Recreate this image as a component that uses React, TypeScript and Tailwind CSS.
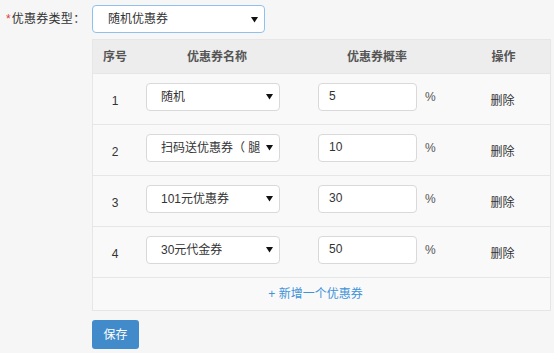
import React from "react";

const rows = [
  { n: "1", name: "随机", p: "5" },
  { n: "2", name: "扫码送优惠券（ 腿", p: "10" },
  { n: "3", name: "101元优惠券", p: "30" },
  { n: "4", name: "30元代金券", p: "50" },
];

function Arrow() {
  return (
    <svg width="7" height="7" viewBox="0 0 7 7" className="shrink-0">
      <polygon points="0,1 7,1 3.5,6.5" fill="#111" />
    </svg>
  );
}

export default function App() {
  return (
    <div
      className="w-[554px] h-[353px] bg-[#f6f6f6] text-[12px] text-[#333] overflow-hidden"
      style={{ fontFamily: '"Liberation Sans", "Noto Sans CJK SC", sans-serif' }}
    >
      <div className="flex items-center pt-[5px]">
        <div className="w-[92px] pl-[6px] flex items-center">
          <span className="text-[#e4393c] mr-[1px]">*</span>
          <span className="text-[12px] text-[#333] tracking-[0.3px]">优惠券类型：</span>
        </div>
        <div className="w-[173px] h-[28px] bg-white border border-[#8fc1ee] rounded-[4px] flex items-center justify-between pl-[15px] pr-[6px]">
          <span>随机优惠券</span>
          <Arrow />
        </div>
      </div>

      <div className="ml-[92px] mt-[6px] w-[459px] border border-[#e6e6e6] bg-[#f9f9f9]">
        <div className="grid grid-cols-[44px_160px_160px_1fr] h-[33px] bg-[#ededed] items-center text-[#555] font-semibold">
          <div className="text-center">序号</div>
          <div className="text-center">优惠券名称</div>
          <div className="text-center">优惠券概率</div>
          <div className="text-center">操作</div>
        </div>
        {rows.map((r) => (
          <div
            key={r.n}
            className="grid grid-cols-[44px_160px_160px_1fr] h-[51px] border-t border-[#e6e6e6] items-center"
          >
            <div className="text-center pt-[3px] text-[#333]">{r.n}</div>
            <div className="pl-[9px] pb-[5px]">
              <div className="w-[134px] h-[28px] bg-white border border-[#d9d9d9] rounded-[4px] flex items-center justify-between pl-[14px] pr-[6px]">
                <span className="whitespace-nowrap overflow-hidden">{r.name}</span>
                <Arrow />
              </div>
            </div>
            <div className="pl-[21px] pb-[5px] flex items-center">
              <div className="w-[99px] h-[28px] bg-white border border-[#d9d9d9] rounded-[4px] flex items-center pl-[10px] pb-[2px]">
                {r.p}
              </div>
              <span className="ml-[8px] text-[#555]">%</span>
            </div>
            <div className="text-center pt-[3px] pr-[2px]">删除</div>
          </div>
        ))}
        <div className="h-[33px] border-t border-[#e6e6e6] flex items-center justify-center text-[#3f93d8] pr-[12px]">
          + 新增一个优惠券
        </div>
      </div>

      <div className="ml-[92px] mt-[9px] w-[47px] h-[29px] bg-[#428bca] rounded-[3px] text-white flex items-center justify-center">
        保存
      </div>
    </div>
  );
}
